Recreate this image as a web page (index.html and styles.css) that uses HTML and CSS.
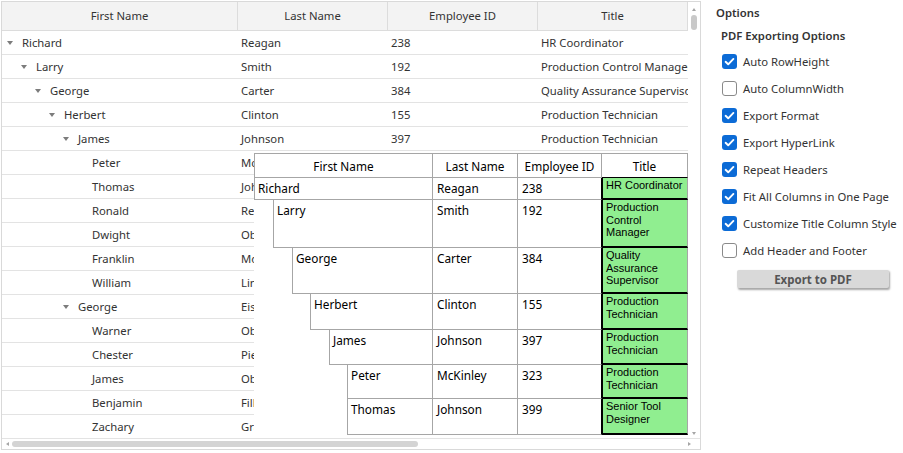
FILE: index.html
```html
<!DOCTYPE html>
<html>
<head>
<meta charset="utf-8">
<title>TreeGrid PDF Export</title>
<link rel="stylesheet" href="styles.css">
</head>
<body>
<div class="app">
  <div class="grid">
    <div class="grid-main">
      <div class="table">
        <div class="hrow">
          <div class="hc c1">First Name</div>
          <div class="hc c2">Last Name</div>
          <div class="hc c3">Employee ID</div>
          <div class="hc c4">Title</div>
        </div>
        <div class="row"><div class="cell c1 l0"><span class="exp open"></span>Richard</div><div class="cell c2">Reagan</div><div class="cell c3">238</div><div class="cell c4">HR Coordinator</div></div>
        <div class="row"><div class="cell c1 l1"><span class="exp open"></span>Larry</div><div class="cell c2">Smith</div><div class="cell c3">192</div><div class="cell c4">Production Control Manager</div></div>
        <div class="row"><div class="cell c1 l2"><span class="exp open"></span>George</div><div class="cell c2">Carter</div><div class="cell c3">384</div><div class="cell c4">Quality Assurance Supervisor</div></div>
        <div class="row"><div class="cell c1 l3"><span class="exp open"></span>Herbert</div><div class="cell c2">Clinton</div><div class="cell c3">155</div><div class="cell c4">Production Technician</div></div>
        <div class="row"><div class="cell c1 l4"><span class="exp open"></span>James</div><div class="cell c2">Johnson</div><div class="cell c3">397</div><div class="cell c4">Production Technician</div></div>
        <div class="row"><div class="cell c1 l5"><span class="exp"></span>Peter</div><div class="cell c2">McKinley</div><div class="cell c3">323</div><div class="cell c4">Production Technician</div></div>
        <div class="row"><div class="cell c1 l5"><span class="exp"></span>Thomas</div><div class="cell c2">Johnson</div><div class="cell c3">399</div><div class="cell c4">Senior Tool Designer</div></div>
        <div class="row"><div class="cell c1 l5"><span class="exp"></span>Ronald</div><div class="cell c2">Reagan</div><div class="cell c3">403</div><div class="cell c4">Production Technician</div></div>
        <div class="row"><div class="cell c1 l5"><span class="exp"></span>Dwight</div><div class="cell c2">Obama</div><div class="cell c3">411</div><div class="cell c4">Production Technician</div></div>
        <div class="row"><div class="cell c1 l5"><span class="exp"></span>Franklin</div><div class="cell c2">Monroe</div><div class="cell c3">420</div><div class="cell c4">Production Technician</div></div>
        <div class="row"><div class="cell c1 l5"><span class="exp"></span>William</div><div class="cell c2">Lincoln</div><div class="cell c3">425</div><div class="cell c4">Production Technician</div></div>
        <div class="row"><div class="cell c1 l4"><span class="exp open"></span>George</div><div class="cell c2">Eisenhower</div><div class="cell c3">430</div><div class="cell c4">Production Supervisor</div></div>
        <div class="row"><div class="cell c1 l5"><span class="exp"></span>Warner</div><div class="cell c2">Obama</div><div class="cell c3">431</div><div class="cell c4">Production Technician</div></div>
        <div class="row"><div class="cell c1 l5"><span class="exp"></span>Chester</div><div class="cell c2">Pierce</div><div class="cell c3">432</div><div class="cell c4">Production Technician</div></div>
        <div class="row"><div class="cell c1 l5"><span class="exp"></span>James</div><div class="cell c2">Obama</div><div class="cell c3">433</div><div class="cell c4">Production Technician</div></div>
        <div class="row"><div class="cell c1 l5"><span class="exp"></span>Benjamin</div><div class="cell c2">Fillmore</div><div class="cell c3">434</div><div class="cell c4">Production Technician</div></div>
        <div class="row"><div class="cell c1 l5"><span class="exp"></span>Zachary</div><div class="cell c2">Grant</div><div class="cell c3">435</div><div class="cell c4">Production Technician</div></div>
      </div>
      <div class="vscroll">
        <span class="arr-up"></span>
        <span class="vthumb"></span>
        <span class="vspace"></span>
        <span class="arr-down"></span>
      </div>
    </div>
    <div class="hscroll">
      <span class="arr-left"></span>
      <span class="hthumb"></span>
      <span class="hspace"></span>
      <span class="arr-right"></span>
    </div>

    <div class="preview">
      <div class="prow phd">
        <div class="pc pc1">First Name</div>
        <div class="pc pc2">Last Name</div>
        <div class="pc pc3">Employee ID</div>
        <div class="pc pc4">Title</div>
      </div>
      <div class="prow r1"><div class="pc pc1 i0">Richard</div><div class="pc pc2">Reagan</div><div class="pc pc3">238</div><div class="pc pc4">HR Coordinator</div></div>
      <div class="prow r2"><div class="pc pc1 i1">Larry</div><div class="pc pc2">Smith</div><div class="pc pc3">192</div><div class="pc pc4">Production Control Manager</div></div>
      <div class="prow r3"><div class="pc pc1 i2">George</div><div class="pc pc2">Carter</div><div class="pc pc3">384</div><div class="pc pc4">Quality Assurance Supervisor</div></div>
      <div class="prow r4"><div class="pc pc1 i3">Herbert</div><div class="pc pc2">Clinton</div><div class="pc pc3">155</div><div class="pc pc4">Production Technician</div></div>
      <div class="prow r5"><div class="pc pc1 i4">James</div><div class="pc pc2">Johnson</div><div class="pc pc3">397</div><div class="pc pc4">Production Technician</div></div>
      <div class="prow r6"><div class="pc pc1 i5">Peter</div><div class="pc pc2">McKinley</div><div class="pc pc3">323</div><div class="pc pc4">Production Technician</div></div>
      <div class="prow r7"><div class="pc pc1 i5">Thomas</div><div class="pc pc2">Johnson</div><div class="pc pc3">399</div><div class="pc pc4">Senior Tool Designer</div></div>
    </div>
  </div>

  <aside class="panel">
    <div class="opt-title">Options</div>
    <div class="sub">PDF Exporting Options</div>
    <div class="chks">
      <label class="chk"><span class="box on"><svg viewBox="0 0 15 15" width="15" height="15"><path d="M3.6 7.8 L6.2 10.3 L11.4 4.9" fill="none" stroke="#fff" stroke-width="1.9" stroke-linecap="round" stroke-linejoin="round"/></svg></span>Auto RowHeight</label>
      <label class="chk"><span class="box"></span>Auto ColumnWidth</label>
      <label class="chk"><span class="box on"><svg viewBox="0 0 15 15" width="15" height="15"><path d="M3.6 7.8 L6.2 10.3 L11.4 4.9" fill="none" stroke="#fff" stroke-width="1.9" stroke-linecap="round" stroke-linejoin="round"/></svg></span>Export Format</label>
      <label class="chk"><span class="box on"><svg viewBox="0 0 15 15" width="15" height="15"><path d="M3.6 7.8 L6.2 10.3 L11.4 4.9" fill="none" stroke="#fff" stroke-width="1.9" stroke-linecap="round" stroke-linejoin="round"/></svg></span>Export HyperLink</label>
      <label class="chk"><span class="box on"><svg viewBox="0 0 15 15" width="15" height="15"><path d="M3.6 7.8 L6.2 10.3 L11.4 4.9" fill="none" stroke="#fff" stroke-width="1.9" stroke-linecap="round" stroke-linejoin="round"/></svg></span>Repeat Headers</label>
      <label class="chk"><span class="box on"><svg viewBox="0 0 15 15" width="15" height="15"><path d="M3.6 7.8 L6.2 10.3 L11.4 4.9" fill="none" stroke="#fff" stroke-width="1.9" stroke-linecap="round" stroke-linejoin="round"/></svg></span>Fit All Columns in One Page</label>
      <label class="chk"><span class="box on"><svg viewBox="0 0 15 15" width="15" height="15"><path d="M3.6 7.8 L6.2 10.3 L11.4 4.9" fill="none" stroke="#fff" stroke-width="1.9" stroke-linecap="round" stroke-linejoin="round"/></svg></span>Customize Title Column Style</label>
      <label class="chk"><span class="box"></span>Add Header and Footer</label>
    </div>
    <button class="btn">Export to PDF</button>
  </aside>
</div>
</body>
</html>
```

FILE: styles.css
```css
* { box-sizing: border-box; }
html, body { margin: 0; padding: 0; background: #fff; }
body {
  font-family: "Segoe UI", "Noto Sans", sans-serif;
  font-size: 11.3px;
  color: #333;
  width: 903px;
  height: 453px;
  overflow: hidden;
}
.app { display: flex; padding: 1px 0 0 1px; height: 453px; }

/* ---------- tree grid ---------- */
.grid {
  position: relative;
  flex: none;
  width: 700px;
  height: 449px;
  border: 1px solid #d9d9d9;
  display: flex;
  flex-direction: column;
}
.grid-main { display: flex; height: 436px; }
.table { width: 686px; overflow: hidden; }
.hrow {
  display: flex;
  height: 29px;
  background: #f3f3f3;
  border-bottom: 1px solid #dcdcdc;
}
.hc {
  display: flex;
  align-items: center;
  justify-content: center;
  padding-bottom: 1px;
  border-right: 1px solid #dcdcdc;
  color: #333;
}
.c1 { width: 236px; flex: none; }
.c2, .c3, .c4 { width: 150px; flex: none; }
.row {
  display: flex;
  height: 24px;
  border-bottom: 1px solid #e3e3e3;
}
.cell {
  display: flex;
  align-items: center;
  padding-left: 3px;
  white-space: nowrap;
  overflow: hidden;
}
.cell.c1 { padding-left: 5px; }
.cell.l1 { padding-left: 19px; }
.cell.l2 { padding-left: 33px; }
.cell.l3 { padding-left: 47px; }
.cell.l4 { padding-left: 61px; }
.cell.l5 { padding-left: 75px; }
.exp { flex: none; width: 15px; height: 4px; position: relative; }
.exp.open::before {
  content: "";
  position: absolute;
  left: 0; top: 0;
  border-left: 3.5px solid transparent;
  border-right: 3.5px solid transparent;
  border-top: 4px solid #7c7c7c;
}

/* scrollbars */
.vscroll {
  width: 12px;
  display: flex;
  flex-direction: column;
  align-items: center;
  padding: 6px 0 3px;
}
.arr-up {
  border-left: 2.5px solid transparent;
  border-right: 2.5px solid transparent;
  border-bottom: 3px solid #a6a6a6;
}
.vthumb {
  margin-top: 4px;
  width: 6px;
  height: 15px;
  border-radius: 3px;
  background: #c9c9c9;
}
.vspace { flex: 1; }
.arr-down {
  border-left: 2.5px solid transparent;
  border-right: 2.5px solid transparent;
  border-top: 3px solid #a6a6a6;
}
.hscroll {
  height: 11px;
  border-top: 1px solid #e3e3e3;
  display: flex;
  align-items: center;
  padding: 0 9px 0 4px;
}
.arr-left {
  border-top: 2.5px solid transparent;
  border-bottom: 2.5px solid transparent;
  border-right: 3px solid #a6a6a6;
}
.hthumb {
  margin-left: 3px;
  width: 406px;
  height: 6px;
  border-radius: 3px;
  background: #d4d4d4;
}
.hspace { flex: 1; }
.arr-right {
  border-top: 2.5px solid transparent;
  border-bottom: 2.5px solid transparent;
  border-left: 3px solid #a6a6a6;
}

/* ---------- exported PDF preview (overlay) ---------- */
.preview {
  position: absolute;
  left: 252px;
  top: 151px;
  width: 434px;
  height: 285px;
  background: #fff;
  color: #000;
  font-size: 11.8px;
}
.prow { display: flex; }
.phd { height: 25px; }
.r1 { height: 22px; }
.r2 { height: 48px; }
.r3 { height: 46px; }
.r4 { height: 36px; }
.r5 { height: 35px; }
.r6 { height: 34px; }
.r7 { height: 36px; }
.pc {
  border-bottom: 1px solid #a6a6a6;
  border-right: 1px solid #a6a6a6;
  padding: 2px 4px 0;
  line-height: 17px;
  white-space: nowrap;
  overflow: hidden;
}
.pc1 { flex: 1; border-left: 1px solid #a6a6a6; padding-left: 3px; }
.pc2 { flex: none; width: 85px; }
.pc3 { flex: none; width: 84px; }
.pc4 { flex: none; width: 86px; }
.i1 { margin-left: 19px; }
.i2 { margin-left: 38px; }
.i3 { margin-left: 56px; }
.i4 { margin-left: 75px; }
.i5 { margin-left: 93px; }
.phd .pc {
  border-top: 1px solid #a6a6a6;
  display: flex;
  align-items: center;
  justify-content: center;
  padding: 1px 0 0;
}
.phd .pc4 { border-bottom-color: #000; }
.prow:not(.phd) .pc3 { border-right-color: #000; }
.prow:not(.phd) .pc4 {
  background: #90ee90;
  border-left: 1px solid #000;
  border-bottom: 2px solid #000;
  font-family: "Liberation Sans", Arial, sans-serif;
  font-size: 11px;
  line-height: 12.5px;
  white-space: normal;
  padding: 1px 0 0 3px;
}

/* ---------- options panel ---------- */
.panel {
  flex: 1;
  padding: 4px 0 0 15px;
  color: #333;
}
.opt-title { font-weight: 600; line-height: 16px; }
.sub { font-weight: 600; line-height: 16px; margin: 7px 0 0 5px; }
.chks { margin-top: 4px; display: flex; flex-direction: column; }
.chk {
  height: 27px;
  display: flex;
  align-items: center;
  gap: 6px;
  padding-left: 6px;
  white-space: nowrap;
}
.box {
  flex: none;
  width: 15px;
  height: 15px;
  border-radius: 3px;
  border: 1.5px solid #8a8a8a;
  background: #fff;
}
.box.on {
  border: none;
  background: #0c6bd6;
}
.box svg { display: block; }
.btn {
  display: block;
  margin: 6px 0 0 21px;
  width: 152px;
  height: 18px;
  padding: 0;
  border: none;
  border-radius: 2px;
  background: #d9d9d9;
  box-shadow: 1px 1.5px 2px rgba(0, 0, 0, 0.35);
  font-family: inherit;
  font-size: 11.5px;
  font-weight: 700;
  color: #555;
}
```
